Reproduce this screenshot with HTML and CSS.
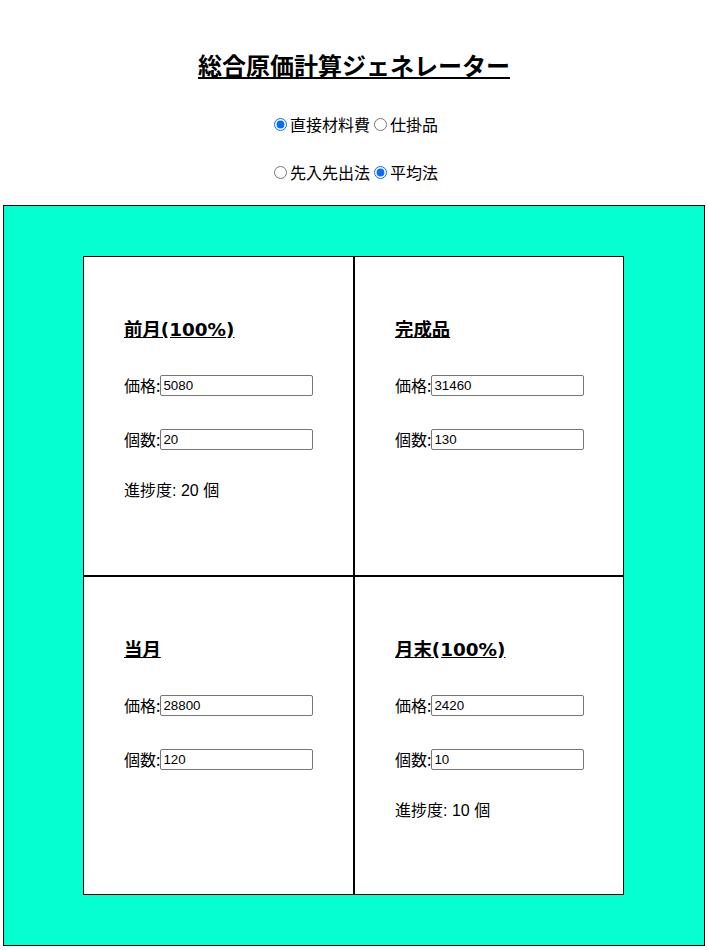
FILE: index.html
```html
<!DOCTYPE html>
<html lang="ja">
<head>
<meta charset="utf-8">
<title>総合原価計算ジェネレーター</title>
<link rel="stylesheet" href="styles.css">
</head>
<body>
<header class="header">
  <h2 class="title">総合原価計算ジェネレーター</h2>
  <div class="radios radios-first">
    <label class="radio"><input type="radio" name="kind" checked>直接材料費</label>
    <label class="radio"><input type="radio" name="kind">仕掛品</label>
  </div>
  <div class="radios radios-second">
    <label class="radio"><input type="radio" name="method">先入先出法</label>
    <label class="radio"><input type="radio" name="method" checked>平均法</label>
  </div>
</header>
<main class="board">
  <div class="grid">
    <section class="cell">
      <h3 class="cell-title">前月(100%)</h3>
      <p class="field"><span class="label">価格:</span><input class="num" type="text" value="5080"></p>
      <p class="field"><span class="label">個数:</span><input class="num" type="text" value="20"></p>
      <p class="progress">進捗度: 20 個</p>
    </section>
    <section class="cell">
      <h3 class="cell-title">完成品</h3>
      <p class="field"><span class="label">価格:</span><input class="num" type="text" value="31460"></p>
      <p class="field"><span class="label">個数:</span><input class="num" type="text" value="130"></p>
    </section>
    <section class="cell">
      <h3 class="cell-title">当月</h3>
      <p class="field"><span class="label">価格:</span><input class="num" type="text" value="28800"></p>
      <p class="field"><span class="label">個数:</span><input class="num" type="text" value="120"></p>
    </section>
    <section class="cell">
      <h3 class="cell-title">月末(100%)</h3>
      <p class="field"><span class="label">価格:</span><input class="num" type="text" value="2420"></p>
      <p class="field"><span class="label">個数:</span><input class="num" type="text" value="10"></p>
      <p class="progress">進捗度: 10 個</p>
    </section>
  </div>
</main>
</body>
</html>
```
FILE: styles.css
```css
html, body {
  margin: 0;
  padding: 0;
  background: #ffffff;
}
body {
  font-family: "Noto Sans CJK JP", "Liberation Sans", sans-serif;
  color: #000;
  font-size: 16px;
}
.header {
  padding-top: 49px;
  text-align: center;
}
.title {
  margin: 0;
  font-size: 24px;
  line-height: 32px;
  font-weight: bold;
  text-decoration: underline;
}
.radios {
  line-height: 24px;
  display: flex;
  justify-content: center;
  gap: 4px;
  padding-left: 4px;
}
.radios-first { margin-top: 31px; }
.radios-second { margin-top: 24px; }
.radio {
  display: inline-flex;
  align-items: center;
  white-space: nowrap;
}
.radio input {
  width: 13px;
  height: 13px;
  margin: 1px 3px 0 0;
  accent-color: #0a6cff;
}
.board {
  margin: 21px 3px 0;
  height: 741px;
  box-sizing: border-box;
  border: 1px solid #000;
  background: #05ffd0;
  padding: 50px 0 50px 79px;
}
.grid {
  display: grid;
  grid-template-columns: 271px 270px;
  grid-template-rows: 320px 319px;
}
.cell {
  background: #fff;
  border: 1px solid #000;
  padding: 40px 40px 0;
  box-sizing: border-box;
}
.cell-title {
  margin: 19px 0 0;
  font-family: "DejaVu Sans", "Noto Sans CJK JP", sans-serif;
  font-size: 18.4px;
  line-height: 27px;
  font-weight: bold;
  text-decoration: underline;
}
.field {
  margin: 31px 0 0;
  height: 22px;
  line-height: 22px;
  display: flex;
  align-items: center;
  white-space: nowrap;
}
.field + .field { margin-top: 32px; }
.label {
  flex: none;
}
.num {
  flex: none;
  width: 153px;
  height: 21px;
  box-sizing: border-box;
  margin: 0;
  padding: 1px 2px;
  border: 1px solid #767676;
  border-radius: 2px;
  font-family: "Liberation Sans", Arial, sans-serif;
  font-size: 13.33px;
  color: #000;
}
.progress {
  margin: 30px 0 0;
  line-height: 22px;
  font-family: "Liberation Sans", "Noto Sans CJK JP", sans-serif;
}
```
